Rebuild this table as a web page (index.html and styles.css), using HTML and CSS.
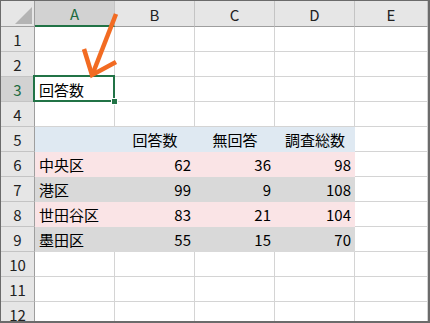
FILE: index.html
```html
<!DOCTYPE html>
<html lang="ja">
<head>
<meta charset="UTF-8">
<title>回答数</title>
<link rel="stylesheet" href="styles.css">
</head>
<body>
<div class="sheet">
  <div class="grid">
    <!-- 列見出し -->
    <div class="corner"><span class="corner-mark"></span></div>
    <div class="col-head is-active">A</div>
    <div class="col-head">B</div>
    <div class="col-head">C</div>
    <div class="col-head">D</div>
    <div class="col-head">E</div>

    <div class="row-head">1</div>
    <div class="cell"></div><div class="cell"></div><div class="cell"></div><div class="cell"></div><div class="cell"></div>

    <div class="row-head">2</div>
    <div class="cell"></div><div class="cell"></div><div class="cell"></div><div class="cell"></div><div class="cell"></div>

    <div class="row-head is-active">3</div>
    <div class="cell selected">回答数</div><div class="cell"></div><div class="cell"></div><div class="cell"></div><div class="cell"></div>

    <div class="row-head">4</div>
    <div class="cell"></div><div class="cell"></div><div class="cell"></div><div class="cell"></div><div class="cell"></div>

    <!-- 集計表 -->
    <div class="row-head">5</div>
    <div class="cell fill-blue"></div>
    <div class="cell fill-blue center">回答数</div>
    <div class="cell fill-blue center">無回答</div>
    <div class="cell fill-blue center">調査総数</div>
    <div class="cell"></div>

    <div class="row-head">6</div>
    <div class="cell fill-pink">中央区</div>
    <div class="cell fill-pink num">62</div>
    <div class="cell fill-pink num">36</div>
    <div class="cell fill-pink num">98</div>
    <div class="cell"></div>

    <div class="row-head">7</div>
    <div class="cell fill-gray">港区</div>
    <div class="cell fill-gray num">99</div>
    <div class="cell fill-gray num">9</div>
    <div class="cell fill-gray num">108</div>
    <div class="cell"></div>

    <div class="row-head">8</div>
    <div class="cell fill-pink">世田谷区</div>
    <div class="cell fill-pink num">83</div>
    <div class="cell fill-pink num">21</div>
    <div class="cell fill-pink num">104</div>
    <div class="cell"></div>

    <div class="row-head">9</div>
    <div class="cell fill-gray">墨田区</div>
    <div class="cell fill-gray num">55</div>
    <div class="cell fill-gray num">15</div>
    <div class="cell fill-gray num">70</div>
    <div class="cell"></div>

    <div class="row-head">10</div>
    <div class="cell"></div><div class="cell"></div><div class="cell"></div><div class="cell"></div><div class="cell"></div>

    <div class="row-head">11</div>
    <div class="cell"></div><div class="cell"></div><div class="cell"></div><div class="cell"></div><div class="cell"></div>

    <div class="row-head">12</div>
    <div class="cell"></div><div class="cell"></div><div class="cell"></div><div class="cell"></div><div class="cell"></div>
  </div>

  <!-- A3を指す矢印 -->
  <svg class="arrow" width="430" height="323" viewBox="0 0 430 323">
    <line x1="116" y1="14" x2="93" y2="73" />
    <polyline points="84,49 92,75 116,62" />
  </svg>
</div>
</body>
</html>
```

FILE: styles.css
```css
body {
  margin: 0;
  font-family: "Noto Sans CJK JP", sans-serif;
  font-size: 15px;
  color: #000;
}
.sheet {
  position: relative;
  width: 430px;
  height: 323px;
  box-sizing: border-box;
  border: 1px solid #6b6b6b;
  border-right-width: 2px;
  border-bottom-width: 2px;
  overflow: hidden;
  background: #fff;
}
.grid {
  display: grid;
  grid-template-columns: 34px repeat(4, 80px) 73px;
  grid-template-rows: 26px repeat(12, 25px);
}
.grid > div {
  box-sizing: border-box;
  display: flex;
  align-items: center;
  line-height: 1;
}
.corner {
  position: relative;
  background: #e6e6e6;
  border-right: 1px solid #9e9e9e;
  border-bottom: 1px solid #9e9e9e;
}
.corner-mark {
  position: absolute;
  right: 2px;
  bottom: 2px;
  width: 0;
  height: 0;
  border-left: 17px solid transparent;
  border-bottom: 17px solid #b4b4b4;
}
.col-head {
  justify-content: center;
  background: #e6e6e6;
  color: #222;
  border-right: 1px solid #c4c4c4;
  border-bottom: 1px solid #9e9e9e;
  padding-top: 1px;
}
.col-head.is-active {
  background: #d2d2d2;
  color: #1d6b3f;
  border-bottom: 2px solid #217346;
}
.row-head {
  justify-content: center;
  background: #e6e6e6;
  color: #222;
  border-right: 1px solid #9e9e9e;
  border-bottom: 1px solid #c4c4c4;
}
.row-head.is-active {
  background: #d2d2d2;
  color: #1d6b3f;
}
.cell {
  position: relative;
  padding: 0 3px 0 4px;
  border-right: 1px solid #d4d4d4;
  border-bottom: 1px solid #d4d4d4;
  white-space: nowrap;
}
.center {
  justify-content: center;
}
.num {
  justify-content: flex-end;
}
.fill-blue {
  background: #dfe9f2;
  border-color: #dfe9f2;
}
.fill-pink {
  background: #fae4e6;
  border-color: #fae4e6;
}
.fill-gray {
  background: #d9d9d9;
  border-color: #d9d9d9;
}
.selected::after {
  content: "";
  position: absolute;
  top: -2px;
  left: -2px;
  right: -1px;
  bottom: -1px;
  border: 2px solid #217346;
}
.selected::before {
  content: "";
  position: absolute;
  right: -4px;
  bottom: -4px;
  width: 5px;
  height: 5px;
  background: #217346;
  border: 1px solid #fff;
  z-index: 1;
}
.arrow {
  position: absolute;
  left: -1px;
  top: -1px;
  fill: none;
  stroke: #f26b22;
  stroke-width: 4.5;
  stroke-linecap: butt;
  stroke-linejoin: miter;
}
```
